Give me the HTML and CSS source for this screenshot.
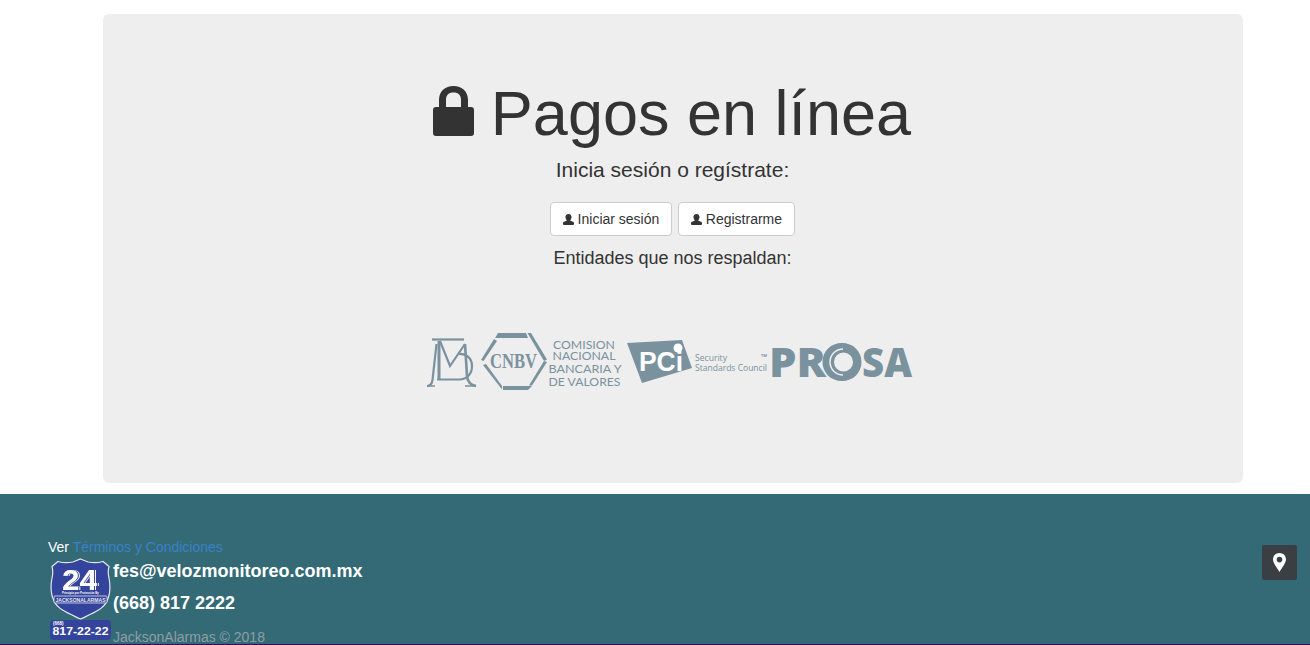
FILE: index.html
```html
<!DOCTYPE html>
<html lang="es">
<head>
<meta charset="utf-8">
<title>Pagos en línea</title>
<link rel="stylesheet" href="styles.css">
</head>
<body>
<main class="jumbotron">
  <h1 class="title">
    <svg class="lock" viewBox="0 0 41 50" aria-hidden="true"><path fill-rule="evenodd" d="M6 21V14C6 5.500 12 0 20.500 0S35 5.500 35 14V21H38C40 21 41 22 41 24V47C41 49 40 50 38 50H3C1 50 0 49 0 47V24C0 22 1 21 3 21ZM13 21H28V14C28 9 25.500 6.500 20.500 6.500S13 9 13 14Z"/></svg>
    <span>Pagos en línea</span>
  </h1>
  <p class="lead">Inicia sesión o regístrate:</p>
  <div class="buttons">
    <a class="btn" href="#"><svg class="user" viewBox="0 0 12 12" aria-hidden="true"><path d="M6 0C8.300 0 9.300 1.500 9.300 3.400C9.300 5 8.600 6.100 8 6.700V7.300L11 8.500C11.700 8.800 12 9.300 12 10V11C12 11.600 11.600 12 11 12H1C.4 12 0 11.600 0 11V10C0 9.300 .3 8.800 1 8.500L4 7.300V6.700C3.400 6.100 2.700 5 2.700 3.400C2.700 1.500 3.700 0 6 0Z"/></svg> Iniciar sesión</a>
    <a class="btn" href="#"><svg class="user" viewBox="0 0 12 12" aria-hidden="true"><path d="M6 0C8.300 0 9.300 1.500 9.300 3.400C9.300 5 8.600 6.100 8 6.700V7.300L11 8.500C11.700 8.800 12 9.300 12 10V11C12 11.600 11.600 12 11 12H1C.4 12 0 11.600 0 11V10C0 9.300 .3 8.800 1 8.500L4 7.300V6.700C3.400 6.100 2.700 5 2.700 3.400C2.700 1.500 3.700 0 6 0Z"/></svg> Registrarme</a>
  </div>
  <p class="entities">Entidades que nos respaldan:</p>
  <div class="logos">
    <svg class="logo-banxico" viewBox="0 0 50 50" aria-hidden="true">
      <g fill="none" stroke="#7a929e" stroke-width="2.200">
        <path d="M0 48C3 48 5 46 5.500 42L9.500 6"/>
        <path d="M5 1.500H37"/>
        <path d="M12 3V42" stroke-width="3"/>
        <path d="M13 3L23 28L38 6"/>
        <path d="M38 6L40 38C40.500 44 43 47 49 48" stroke-width="2.600"/>
        <path d="M31 16C39 15 45 20 45 28C45 36 40 41.500 32 41.500H10"/>
        <path d="M0 48H8M38 48H49" stroke-width="1.500"/>
      </g>
    </svg>
    <svg class="logo-cnbv" viewBox="0 0 146 58" aria-hidden="true">
      <g fill="#7a929e">
        <path d="M17 0H45L47 5H14Z"/>
        <path d="M46.500 0H50L66 26.500L63 28Z"/>
        <path d="M13 6L16 8L2.500 28L0 27Z"/>
        <path d="M2 32L5 31L21 53L21 56.500Z"/>
        <path d="M63 28L66 29L51 52.500L48 52.500Z"/>
        <path d="M22 53H51L47 57H22Z"/>
        <text class="cnbv-mark" x="32.500" y="35" text-anchor="middle" textLength="47" lengthAdjust="spacingAndGlyphs">CNBV</text>
        <g class="cnbv-words" text-anchor="middle">
          <text x="103" y="15.500" textLength="62" lengthAdjust="spacingAndGlyphs">COMISION</text>
          <text x="103" y="27" textLength="63" lengthAdjust="spacingAndGlyphs">NACIONAL</text>
          <text x="104" y="39.500" textLength="73" lengthAdjust="spacingAndGlyphs">BANCARIA Y</text>
          <text x="103.500" y="52.500" textLength="72" lengthAdjust="spacingAndGlyphs">DE VALORES</text>
        </g>
      </g>
    </svg>
    <svg class="logo-pci" viewBox="0 0 142 44" aria-hidden="true">
      <path fill="#7a929e" d="M0 3L55 0L65 28L15 43Z"/>
      <text class="pci-mark" x="12" y="31" textLength="44" lengthAdjust="spacingAndGlyphs">PCi</text>
      <circle cx="51" cy="8" r="4.500" fill="#fff"/>
      <g class="pci-words" fill="#7a929e">
        <text x="68" y="21" textLength="32" lengthAdjust="spacingAndGlyphs">Security</text>
        <text x="68" y="31" textLength="72" lengthAdjust="spacingAndGlyphs">Standards Council</text>
        <text class="tm" x="134" y="17">TM</text>
      </g>
    </svg>
    <svg class="logo-prosa" viewBox="0 0 142 38" aria-hidden="true">
      <g fill="#7a929e">
        <text class="prosa-mark" x="-2" y="34" textLength="57" lengthAdjust="spacingAndGlyphs">PR</text>
        <path fill-rule="evenodd" d="M71 0C82 0 90.500 8 90.500 19S82 38 71 38S51.500 30 51.500 19S60 0 71 0ZM72.500 9.500A9.500 9.500 0 1 0 72.500 28.500A9.500 9.500 0 1 0 72.500 9.500Z"/>
        <path fill="none" stroke="#eee" stroke-width="1.500" d="M72 6A13 13 0 0 0 72 32"/>
        <text class="prosa-mark" x="91" y="34" textLength="50" lengthAdjust="spacingAndGlyphs">SA</text>
      </g>
    </svg>
  </div>
</main>
<footer class="footer">
  <div class="footer-main">
    <p class="terms">Ver <a href="#">Términos y Condiciones</a></p>
    <div class="contact">
      <svg class="badge" viewBox="0 0 63 82" aria-hidden="true">
        <path fill="#34439b" stroke="#e4e7f2" stroke-width="1.200" d="M30.500 1L38 4C43 5 48 5 53 3.500L59 8.500C58 12 58 16 59 20C60.500 28 60 37 57 43C53 52 41 56 30.500 61C20 56 8 52 4 43C1 37 .5 28 2 20C3 16 3 12 2 8.500L8 3.500C13 5 18 5 23 4Z"/>
        <text class="badge-num" x="12" y="32" textLength="35" lengthAdjust="spacingAndGlyphs">24</text>
        <text class="badge-small" x="30.500" y="36" text-anchor="middle">Principio por Protección By</text>
        <rect x="4" y="38" width="53" height="7" rx="1" fill="#34439b" stroke="#e4e7f2" stroke-width=".8"/>
        <text class="badge-name" x="30.500" y="43.500" text-anchor="middle" textLength="50" lengthAdjust="spacingAndGlyphs">JACKSONALARMAS</text>
        <rect x="0" y="62" width="61" height="20" rx="4" fill="#34439b"/>
        <text class="badge-area" x="3" y="67">(668)</text>
        <text class="badge-phone" x="30.500" y="77" text-anchor="middle" textLength="56" lengthAdjust="spacingAndGlyphs">817-22-22</text>
      </svg>
      <div class="contact-text">
        <a class="strong" href="#">fes@velozmonitoreo.com.mx</a>
        <a class="strong" href="#">(668) 817 2222</a>
        <span class="copy">JacksonAlarmas © 2018</span>
      </div>
    </div>
  </div>
  <a class="map-btn" href="#" aria-label="Ubicación">
    <svg viewBox="0 0 13 19" aria-hidden="true"><path fill="#fff" fill-rule="evenodd" d="M6.500 0C10.200 0 13 2.800 13 6.500C13 10 9 14.500 6.500 19C4 14.500 0 10 0 6.500C0 2.800 2.800 0 6.500 0ZM6.500 3.800A2.800 2.800 0 1 0 6.500 9.400A2.800 2.800 0 1 0 6.500 3.800Z"/></svg>
  </a>
</footer>
</body>
</html>
```
FILE: styles.css
```css
* { box-sizing: border-box; }
html, body { margin: 0; padding: 0; height: 645px; overflow: hidden; background: #fff; }
body { font-family: "Liberation Sans", Arial, sans-serif; font-size: 14px; line-height: 20px; color: #333; }

.jumbotron {
  width: 1140px;
  height: 469px;
  margin: 14px 0 11px 103px;
  padding-top: 61px;
  background: #eee;
  border-radius: 6px;
  text-align: center;
}
.title {
  display: flex;
  justify-content: center;
  align-items: flex-start;
  gap: 17px;
  margin: 0;
  padding-right: 2px;
  height: 77px;
  font-size: 63px;
  font-weight: 400;
  line-height: 77px;
}
.lock { width: 41px; height: 50px; margin-top: 11px; fill: #333; }
.lead { margin: 7px 0 0; padding-right: 1px; font-size: 21px; line-height: 22px; }
.buttons { display: flex; justify-content: center; gap: 6px; margin-top: 21px; padding-right: 1px; }
.btn {
  display: block;
  width: 122px;
  height: 34px;
  padding: 6px 0;
  background: #fff;
  border: 1px solid #ccc;
  border-radius: 4px;
  color: #333;
  text-decoration: none;
}
.btn + .btn { width: 117px; }
.user { width: 11px; height: 11px; fill: #333; vertical-align: -1px; }
.entities { margin: 12px 0 0; padding-right: 1px; font-size: 18px; line-height: 20px; }

.logos { display: flex; justify-content: center; align-items: center; margin-top: 57px; padding-right: 6px; height: 74px; }
.logo-banxico { width: 50px; height: 50px; margin-top: 2px; }
.logo-cnbv { width: 146px; height: 58px; margin-left: 4px; }
.logo-pci { width: 142px; height: 44px; }
.logo-prosa { width: 142px; height: 38px; margin-left: 2px; }
.logos svg { overflow: visible; }
.cnbv-mark { font-family: "Liberation Serif", serif; font-size: 21px; font-weight: 700; }
.cnbv-words text { font-family: "Lato", sans-serif; font-size: 12px; }
.pci-mark { font-family: "Liberation Sans", sans-serif; font-size: 27px; font-weight: 700; fill: #fff; }
.pci-words text { font-family: "Open Sans", sans-serif; font-size: 8.500px; }
.pci-words .tm { font-size: 4px; font-weight: 700; }
.prosa-mark { font-family: "Open Sans", sans-serif; font-size: 40px; font-weight: 800; }

.footer {
  display: flex;
  justify-content: space-between;
  align-items: flex-start;
  height: 151px;
  padding: 45px 13px 0 48px;
  background: #336a75;
  border-bottom: 1px solid #3d0a5c;
}
.footer-main { width: 500px; }
.terms { margin: 0; color: #fff; height: 16px; line-height: 16px; }
.terms a { color: #3b80c9; text-decoration: none; }
.contact { display: flex; align-items: flex-start; margin-top: 3px; margin-left: 2px; }
.badge { flex: none; width: 63px; height: 82px; }
.contact-text { display: flex; flex-direction: column; }
.strong { display: block; height: 32px; font-size: 18px; font-weight: 700; line-height: 26px; color: #fff; text-decoration: none; }
.copy { margin-top: 5px; color: #8f9ea3; line-height: 20px; }
.badge-num { font-family: "Liberation Sans", sans-serif; font-size: 30px; font-weight: 700; fill: #fff; filter: drop-shadow(1px 0 0 #34439b) drop-shadow(1px 0 0 #fff); }
.badge-small { font-family: "Liberation Sans", sans-serif; font-size: 2.800px; font-weight: 700; fill: #fff; }
.badge-name { font-family: "Liberation Sans", sans-serif; font-size: 5.500px; font-weight: 700; fill: #e4e7f2; }
.badge-area { font-family: "Liberation Sans", sans-serif; font-size: 4.500px; font-weight: 700; fill: #fff; }
.badge-phone { font-family: "Liberation Sans", sans-serif; font-size: 11px; font-weight: 700; fill: #fff; }
.map-btn {
  display: flex;
  align-items: center;
  justify-content: center;
  width: 35px;
  height: 35px;
  margin-top: 6px;
  background: #3a3f44;
  border-radius: 2px;
}
.map-btn svg { width: 13px; height: 19px; }
```
